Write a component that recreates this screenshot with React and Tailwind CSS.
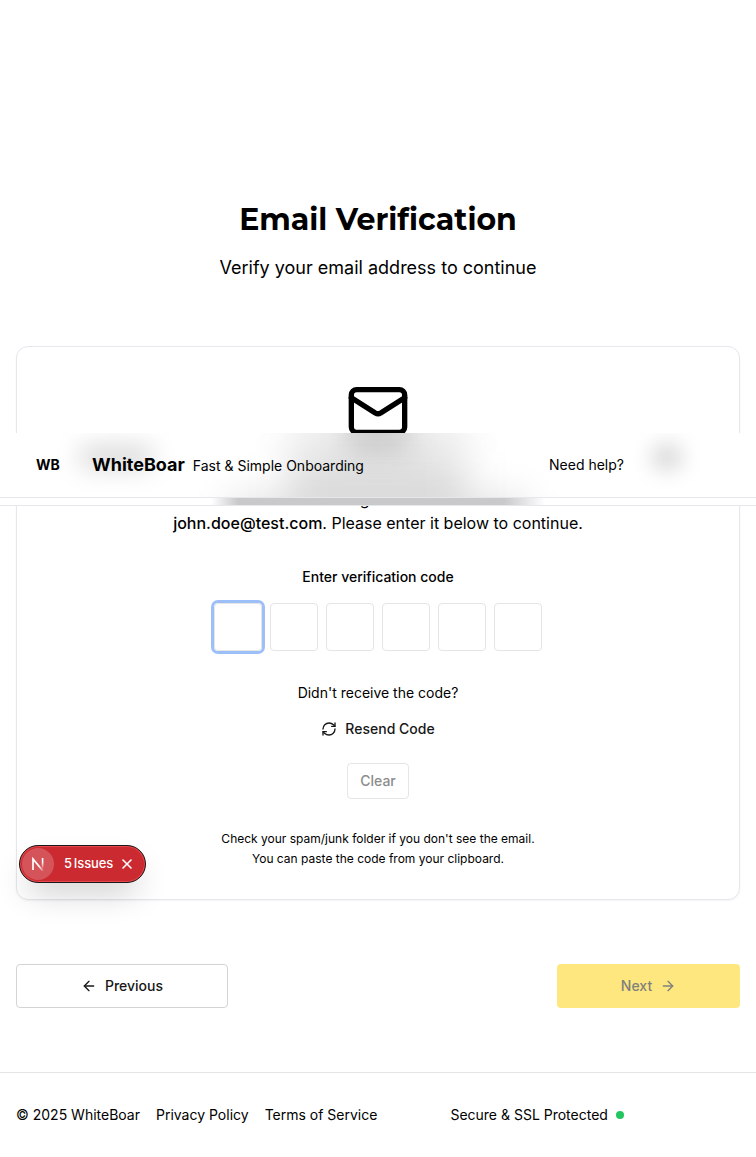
import React from 'react';
import { ArrowLeft, ArrowRight, Mail, RefreshCw, X } from 'lucide-react';

function Header() {
  return (
    <div className="absolute inset-x-0 top-[433px] h-[73px] overflow-hidden border-b border-gray-200 bg-white">
      <div className="absolute left-[78px] top-[12px] h-[24px] w-[76px] rounded-full bg-black/14 blur-[12px]" />
      <div className="absolute left-[651px] top-[10px] h-[28px] w-[32px] rounded-full bg-black/14 blur-[10px]" />
      <div className="absolute left-[290px] top-[-30px] h-[50px] w-[176px] bg-black/5 blur-[18px]" />
      <div className="absolute left-[346px] top-[-30px] h-[52px] w-[64px] bg-black/13 blur-[14px]" />
      <div className="absolute left-[288px] top-[18px] h-[60px] w-[178px] bg-black/12 blur-[20px]" />
      <div className="absolute left-[226px] top-[58px] h-[40px] w-[302px] bg-black/8 blur-[16px]" />
      <div className="absolute left-0 top-[65px] h-[7px] w-full overflow-hidden bg-white">
        <div className="h-full w-full bg-linear-to-r from-transparent from-[211px] via-[#c9c9c9] via-[238px] to-[#c9c9c9] to-[360px]">
          <div className="ml-[360px] h-full bg-linear-to-r from-[#c9c9c9] from-[144px] to-white to-[185px]" />
        </div>
      </div>
      <header className="relative flex h-[65px] items-center border-b border-gray-200 pl-9 pr-[132px]">
        <span className="w-14 text-sm font-bold">WB</span>
        <span className="text-lg font-bold leading-7">WhiteBoar</span>
        <span className="ml-2 mt-[2px] text-sm">Fast &amp; Simple Onboarding</span>
        <span className="ml-auto text-sm">Need help?</span>
      </header>
    </div>
  );
}

function IssuesBadge() {
  return (
    <div className="absolute left-[19px] top-[845px] flex h-[38px] w-[127px] items-center rounded-full border border-[#171717] bg-[#ca2a30] pl-[2px] text-white shadow-[inset_0_0_0_1px_#e5484d,0_16px_32px_-8px_rgba(0,0,0,0.24)]">
      <span className="flex size-8 items-center justify-center rounded-full bg-white/20">
        <svg width="14" height="14" viewBox="0 0 14 14" fill="none">
          <defs>
            <linearGradient id="stem" x1="0" y1="0" x2="0" y2="1">
              <stop offset="0.4" stopColor="white" />
              <stop offset="1" stopColor="white" stopOpacity="0" />
            </linearGradient>
            <linearGradient id="diagonal" x1="0" y1="0" x2="1" y2="1">
              <stop offset="0.6" stopColor="white" />
              <stop offset="1" stopColor="white" stopOpacity="0.2" />
            </linearGradient>
          </defs>
          <path d="M2 13V2L12 14" stroke="url(#diagonal)" strokeWidth="1.7" />
          <rect x="10.8" y="1" width="1.6" height="11" fill="url(#stem)" />
        </svg>
      </span>
      <span className="ml-[10px] text-[13px] font-medium tracking-[-0.1px] [word-spacing:-1.5px]">5 Issues</span>
      <X className="ml-[6px] size-4" strokeWidth={2.4} />
    </div>
  );
}

export default function App() {
  return (
    <div className="relative h-[1157px] overflow-hidden bg-white font-['Inter',sans-serif] text-black">
      <main className="px-4 pt-[201px]">
        <div className="text-center">
          <h1 className="font-['Montserrat','Inter',sans-serif] text-[30px] font-bold leading-[38px]">Email Verification</h1>
          <p className="mt-[15px] text-lg leading-7">Verify your email address to continue</p>
        </div>

        <section className="mt-16 flex h-[554px] flex-col items-center rounded-xl border border-gray-200 text-center shadow-xs">
          <Mail className="mt-8 size-16 shrink-0" strokeWidth={2} />
          <p className="mt-[44px] text-base leading-6">
            We&apos;ve sent a 6-digit verification code to<br />
            <span className="font-medium">john.doe@test.com</span>. Please enter it below to continue.
          </p>
          <label className="mt-8 text-sm font-medium leading-5">Enter verification code</label>
          <div className="mt-4 flex gap-2">
            {[0, 1, 2, 3, 4, 5].map((i) => (
              <div key={i} className={i === 0 ? 'size-12 rounded border border-neutral-200 ring-3 ring-[#9cbffa]' : 'size-12 rounded border border-neutral-200'} />
            ))}
          </div>
          <p className="mt-8 text-sm leading-5">Didn&apos;t receive the code?</p>
          <button className="mt-2 flex h-9 items-center gap-2 text-sm font-medium text-neutral-900">
            <RefreshCw className="size-4" />Resend Code
          </button>
          <button className="mt-4 h-9 w-[62px] rounded border border-neutral-200 text-sm font-medium text-[#8c8c8c]">Clear</button>
          <div className="mt-[30px] text-xs leading-5">
            <p>Check your spam/junk folder if you don&apos;t see the email.</p>
            <p>You can paste the code from your clipboard.</p>
          </div>
        </section>

        <div className="mt-16 flex justify-between text-sm font-medium">
          <button className="flex h-11 w-[212px] items-center justify-center gap-2 rounded border border-neutral-300 text-neutral-900">
            <ArrowLeft className="size-4" />Previous
          </button>
          <button className="flex h-11 w-[183px] items-center justify-center gap-2 rounded bg-[#ffe780] text-[#80807c]">
            Next<ArrowRight className="size-4" />
          </button>
        </div>
      </main>

      <footer className="mt-16 flex h-[85px] items-center border-t border-neutral-200 pl-4 text-sm">
        <span>© 2025 WhiteBoar</span>
        <span className="ml-4">Privacy Policy</span>
        <span className="ml-4">Terms of Service</span>
        <span className="ml-[73px]">Secure &amp; SSL Protected</span>
        <span className="ml-2 size-2 rounded-full bg-[#22c55e]" />
      </footer>
      <Header />
      <IssuesBadge />
    </div>
  );
}
